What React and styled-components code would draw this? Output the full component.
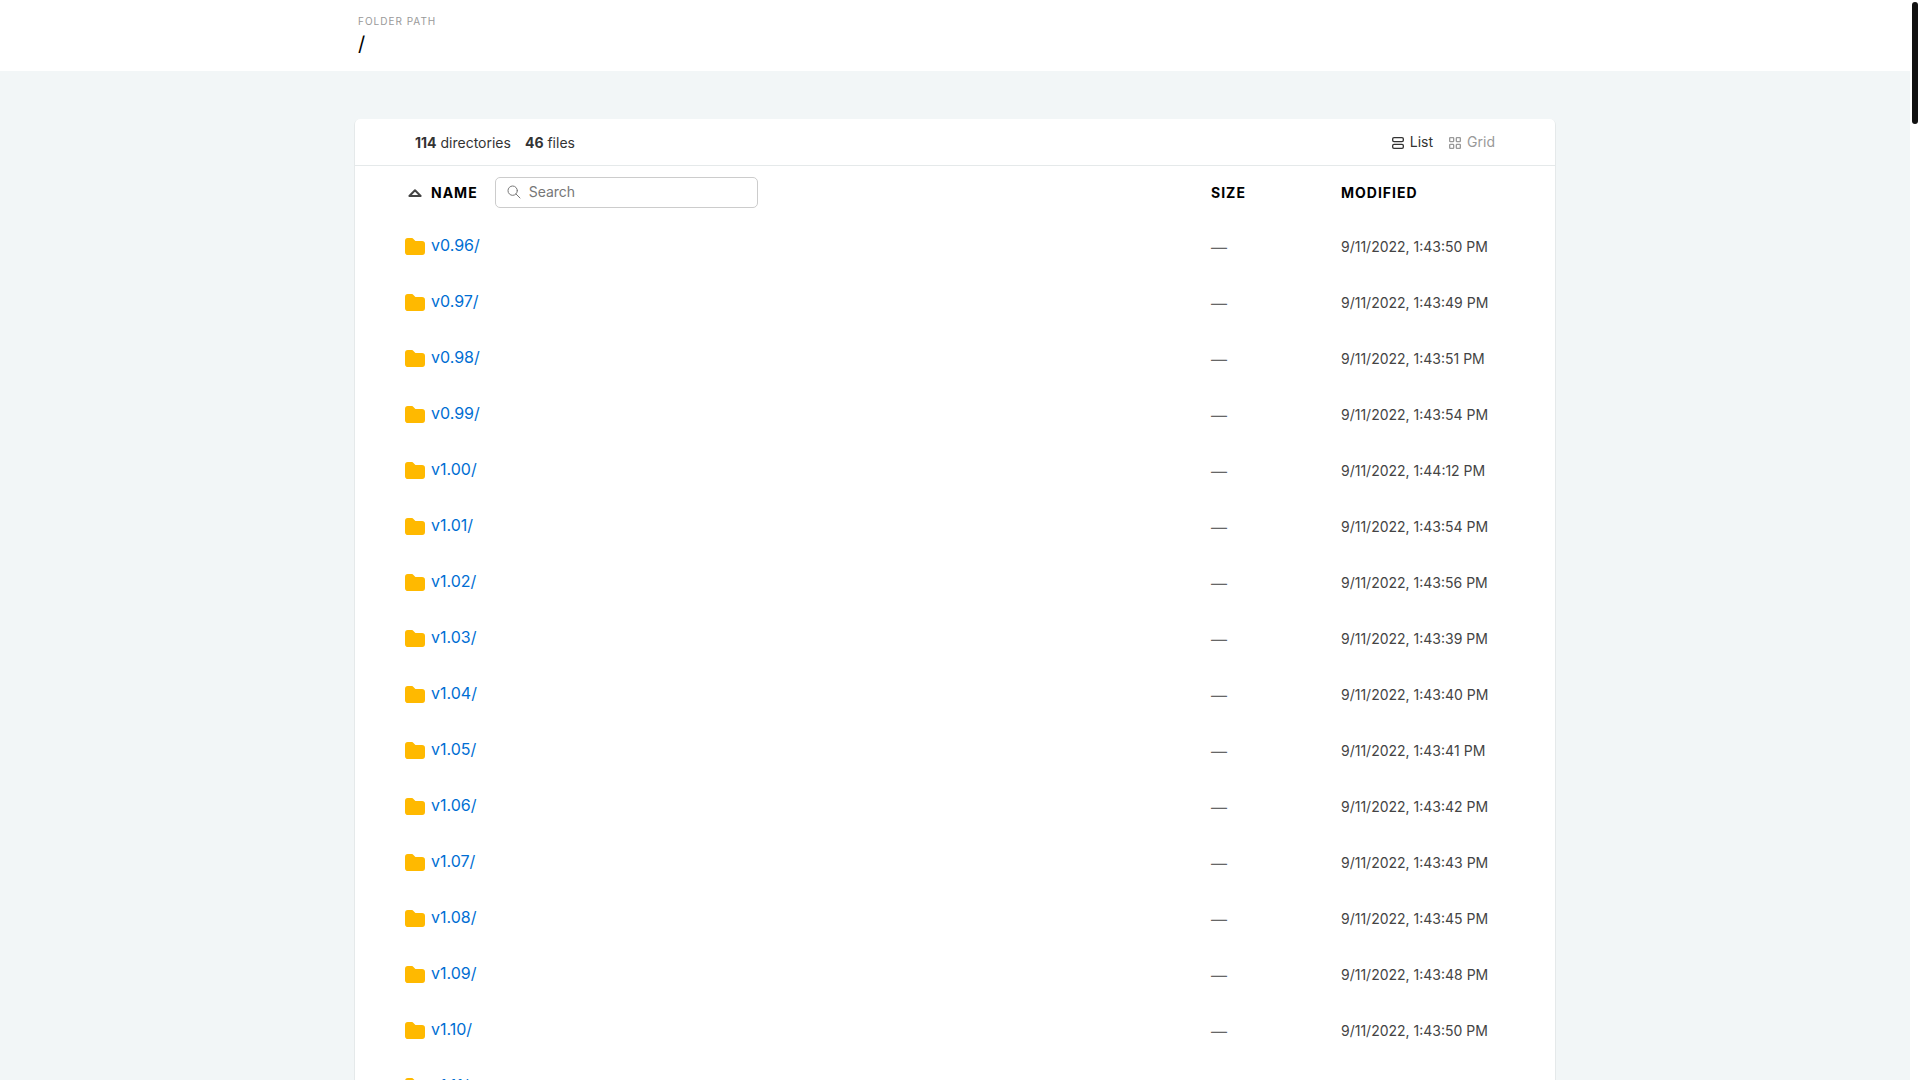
import styled, { createGlobalStyle } from "styled-components"

const rows = [
  ["v0.96/", "9/11/2022, 1:43:50 PM"],
  ["v0.97/", "9/11/2022, 1:43:49 PM"],
  ["v0.98/", "9/11/2022, 1:43:51 PM"],
  ["v0.99/", "9/11/2022, 1:43:54 PM"],
  ["v1.00/", "9/11/2022, 1:44:12 PM"],
  ["v1.01/", "9/11/2022, 1:43:54 PM"],
  ["v1.02/", "9/11/2022, 1:43:56 PM"],
  ["v1.03/", "9/11/2022, 1:43:39 PM"],
  ["v1.04/", "9/11/2022, 1:43:40 PM"],
  ["v1.05/", "9/11/2022, 1:43:41 PM"],
  ["v1.06/", "9/11/2022, 1:43:42 PM"],
  ["v1.07/", "9/11/2022, 1:43:43 PM"],
  ["v1.08/", "9/11/2022, 1:43:45 PM"],
  ["v1.09/", "9/11/2022, 1:43:48 PM"],
  ["v1.10/", "9/11/2022, 1:43:50 PM"],
  ["v1.11/", "9/11/2022, 1:43:51 PM"],
]

const OutlineIcon = ({ size, stroke = 2, children }) => (
  <svg
    width={size}
    height={size}
    viewBox="0 0 24 24"
    fill="none"
    stroke="currentColor"
    strokeWidth={stroke}
    strokeLinecap="round"
    strokeLinejoin="round"
    aria-hidden="true"
  >
    {children}
  </svg>
)

const FolderIcon = () => (
  <svg width="24" height="24" viewBox="0 0 24 24" fill="#ffb900" aria-hidden="true">
    <path d="M9 3a1 1 0 0 1 .608 .206l.1 .087l2.706 2.707h6.586a3 3 0 0 1 2.995 2.824l.005 .176v8a3 3 0 0 1 -2.824 2.995l-.176 .005h-14a3 3 0 0 1 -2.995 -2.824l-.005 -.176v-11a3 3 0 0 1 2.824 -2.995l.176 -.005h4z" />
  </svg>
)

const App = () => (
  <>
    <GlobalStyle />
    <Viewport>
      <Page>
        <Header>
          <HeaderInner>
            <PathLabel>Folder Path</PathLabel>
            <Path>
              <a href="#root">/</a>
            </Path>
          </HeaderInner>
        </Header>
        <Listing>
          <Meta>
            <Summary>
              <span>
                <b>114</b> directories
              </span>
              <span>
                <b>46</b> files
              </span>
            </Summary>
            <Layouts>
              <LayoutLink href="#list" $current>
                <OutlineIcon size={16}>
                  <rect x="4" y="4" width="16" height="6" rx="2" />
                  <rect x="4" y="14" width="16" height="6" rx="2" />
                </OutlineIcon>
                List
              </LayoutLink>
              <LayoutLink href="#grid">
                <OutlineIcon size={16}>
                  <rect x="4" y="4" width="6" height="6" rx="1" />
                  <rect x="14" y="4" width="6" height="6" rx="1" />
                  <rect x="4" y="14" width="6" height="6" rx="1" />
                  <rect x="14" y="14" width="6" height="6" rx="1" />
                </OutlineIcon>
                Grid
              </LayoutLink>
            </Layouts>
          </Meta>
          <Table>
            <thead>
              <tr>
                <HeadCell>
                  <NameHead>
                    <SortLink href="#sort" aria-label="Sort by name">
                      <svg width="14" height="8" viewBox="0 0 14 8" aria-hidden="true">
                        <path
                          d="M7 1.2 L12.6 7 H1.4 Z"
                          fill="none"
                          stroke="currentColor"
                          strokeWidth="2"
                          strokeLinejoin="round"
                        />
                      </svg>
                    </SortLink>
                    <a href="#name">Name</a>
                    <SearchBox>
                      <OutlineIcon size={16} stroke={1.5}>
                        <circle cx="10" cy="10" r="7" />
                        <path d="M21 21l-6 -6" />
                      </OutlineIcon>
                      <SearchInput type="search" placeholder="Search" aria-label="Search" />
                    </SearchBox>
                  </NameHead>
                </HeadCell>
                <HeadCell $width="130px">
                  <a href="#size">Size</a>
                </HeadCell>
                <HeadCell $width="214px">
                  <a href="#modified">Modified</a>
                </HeadCell>
              </tr>
            </thead>
            <tbody>
              {rows.map(([name, modified]) => (
                <tr key={name}>
                  <Cell>
                    <FileLink href={`#${name}`}>
                      <FolderIcon />
                      <FileName>{name}</FileName>
                    </FileLink>
                  </Cell>
                  <Cell $faded>—</Cell>
                  <Cell>
                    <Modified>{modified}</Modified>
                  </Cell>
                </tr>
              ))}
            </tbody>
          </Table>
        </Listing>
      </Page>
      <ScrollRail>
        <ScrollThumb />
      </ScrollRail>
    </Viewport>
  </>
)

export default App

//styling

const GlobalStyle = createGlobalStyle`
  * {
    box-sizing: border-box;
    margin: 0;
    padding: 0;
  }
  body {
    font-family: Inter, "Liberation Sans", sans-serif;
    font-size: 16px;
    color: #333;
    background: #f2f6f7;
    overflow: hidden;
  }
  a {
    color: inherit;
    text-decoration: none;
  }
  svg {
    display: block;
    flex-shrink: 0;
  }
`

const Viewport = styled.div`
  display: grid;
  grid-template-columns: minmax(0, 1fr) 10px;
  height: 100vh;
  overflow: hidden;
`

const Page = styled.div`
  min-width: 0;
`

const Header = styled.header`
  background: #fff;
  padding: 15px 0;
`

const HeaderInner = styled.div`
  max-width: 1200px;
  margin: 0 auto;
  padding: 0 3px;
`

const PathLabel = styled.div`
  font-size: 10px;
  line-height: 12px;
  letter-spacing: 1px;
  text-transform: uppercase;
  color: #999;
  margin-bottom: 5px;
`

const Path = styled.h1`
  font-size: 20px;
  line-height: 24px;
  font-weight: 400;
  color: #000;
`

const Listing = styled.main`
  max-width: 1200px;
  margin: 48px auto 0;
  background: #fff;
  border-radius: 5px;
  box-shadow: 0 1px 0 1px #e5e9ea;
`

const Meta = styled.div`
  display: flex;
  align-items: center;
  justify-content: space-between;
  height: 47px;
  padding: 0 60px;
  border-bottom: 1px solid #e5e9ea;
  font-size: 14px;
  line-height: 20px;
`

const Summary = styled.div`
  display: flex;
  gap: 14px;
  padding-top: 2px;
`

const Layouts = styled.nav`
  display: flex;
  gap: 14px;
`

const LayoutLink = styled.a`
  display: flex;
  align-items: center;
  gap: 4px;
  color: ${({ $current }) => ($current ? "#333" : "#999")};
  svg {
    margin-top: 2px;
  }
`

const Table = styled.table`
  width: 100%;
  table-layout: fixed;
  border-collapse: collapse;
`

const HeadCell = styled.th`
  width: ${({ $width }) => $width || "auto"};
  height: 52px;
  padding-top: 2px;
  text-align: left;
  vertical-align: middle;
  font-size: 14px;
  line-height: 20px;
  font-weight: 700;
  letter-spacing: 1px;
  text-transform: uppercase;
  color: #000;
  &:first-child {
    padding-left: 48px;
  }
`

const NameHead = styled.div`
  display: flex;
  align-items: center;
`

const SortLink = styled.a`
  display: flex;
  justify-content: center;
  width: 24px;
  margin-right: 4px;
  color: #444;
`

const SearchBox = styled.label`
  display: flex;
  align-items: center;
  gap: 7px;
  width: 263px;
  height: 31px;
  margin-left: 17px;
  margin-bottom: 2px;
  padding: 0 10px;
  border: 1px solid #ccc;
  border-radius: 5px;
  color: #777;
`

const SearchInput = styled.input`
  flex: 1;
  min-width: 0;
  border: 0;
  outline: 0;
  background: none;
  font-family: inherit;
  font-size: 14px;
  line-height: 20px;
  color: #333;
  &::placeholder {
    color: #777;
  }
`

const Cell = styled.td`
  height: 56px;
  padding-top: 2px;
  vertical-align: middle;
  font-size: ${({ $faded }) => ($faded ? "16px" : "14px")};
  line-height: 20px;
  color: ${({ $faded }) => ($faded ? "#666" : "#444")};
  &:first-child {
    padding-left: 48px;
  }
`

const FileLink = styled.a`
  display: flex;
  align-items: center;
  gap: 4px;
  font-size: 16px;
  color: #006ed3;
`

const FileName = styled.span`
  padding-bottom: 4px;
`

const Modified = styled.time`
  font-kerning: none;
`

const ScrollRail = styled.div`
  background: #fff;
  padding: 2px;
`

const ScrollThumb = styled.div`
  width: 6px;
  height: 122px;
  border-radius: 3px;
  background: #111;
`
